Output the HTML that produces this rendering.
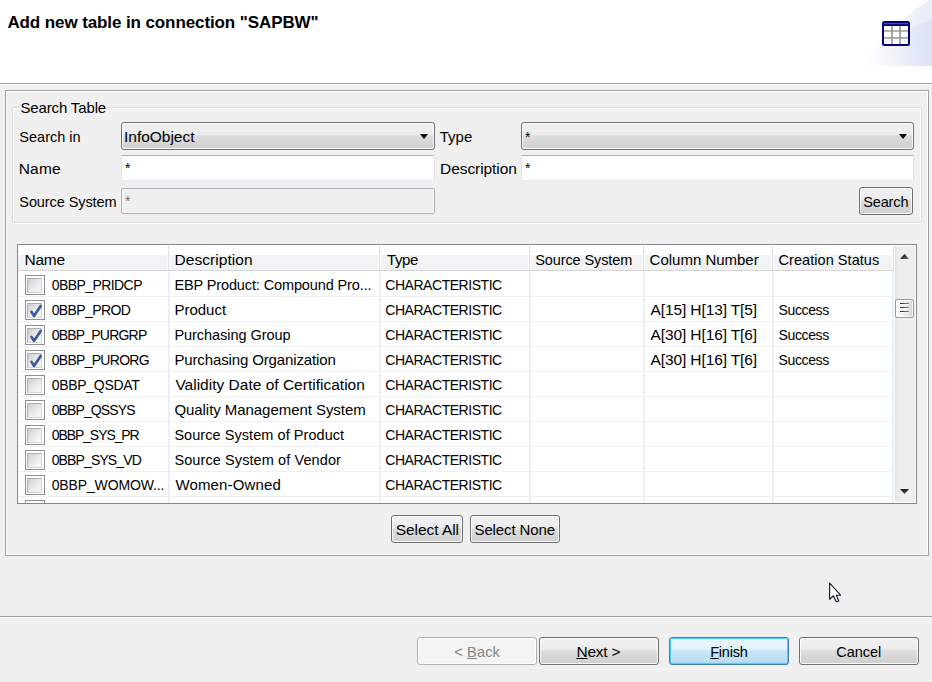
<!DOCTYPE html><html><head><meta charset="utf-8"><style>
*{margin:0;padding:0;box-sizing:border-box}
html,body{width:932px;height:682px;overflow:hidden}
body{position:relative;background:#f0f0f0;font-family:"Liberation Sans",sans-serif;font-size:14px;line-height:20px;color:#000}
.t{position:absolute;white-space:pre;line-height:20px}
.a{position:absolute}
.btn{position:absolute;border:1px solid #707070;border-radius:3px;
 background:linear-gradient(#f2f2f2 0%,#ebebeb 45%,#dddddd 49%,#cfcfcf 100%);
 box-shadow:inset 0 0 0 1px rgba(255,255,255,.85)}
.btnd{position:absolute;border:1px solid #adb2b5;border-radius:3px;background:#f4f4f4;
 box-shadow:inset 0 0 0 1px #fcfcfc}
.tf{position:absolute;background:#fff;border:1px solid;border-color:#abadb3 #dbdfe6 #e3e9ef #e2e3ea;border-radius:2px}
.tfd{position:absolute;background:#f0f0f0;border:1px solid #adb2b5;border-radius:2px;box-shadow:inset 0 0 0 1px #f8f8f8}
.arr{position:absolute;width:0;height:0;border-left:4.6px solid transparent;border-right:4.6px solid transparent;border-top:5px solid #000}
.cb{position:absolute;width:20px;height:20px;border:1px solid #8f8f8f;background:#fff}
.cb i{position:absolute;left:1px;top:2px;width:15px;height:15px;border:1px solid;border-color:#aab0b8 #d6d6d6 #d6d6d6 #aab0b8;
 background:linear-gradient(135deg,#c9cdd3 0%,#e2e4e7 40%,#f3f3f3 75%,#f8f8f8 100%)}
.cb svg{position:absolute;left:0;top:0}
.hl{position:absolute;height:1px;background:#f0f0f0}
.vl{position:absolute;width:2px;background:linear-gradient(90deg,#e5eefb 0,#e5eefb 50%,#f1f1f1 50%)}
</style></head><body>
<div class="a" style="left:0;top:0;width:932px;height:83px;background:#fff;overflow:hidden">
<svg class="a" style="left:832px;top:0" width="100" height="66" viewBox="832 0 100 66"><defs><linearGradient id="bg1" gradientUnits="userSpaceOnUse" x1="858" y1="50" x2="932" y2="40"><stop offset="0" stop-color="#fff"/><stop offset="1" stop-color="#eaeef9"/></linearGradient><linearGradient id="bg2" gradientUnits="userSpaceOnUse" x1="880" y1="50" x2="932" y2="50"><stop offset="0" stop-color="#dfe5f6" stop-opacity="0"/><stop offset="1" stop-color="#d6def3" stop-opacity="1"/></linearGradient></defs><path d="M858 66 C882 42 905 12 932 -1 L932 66 Z" fill="url(#bg1)"/><path d="M866 66 C882 48 900 28 932 20 L932 66 Z" fill="url(#bg2)" opacity=".7"/></svg>
<svg class="a" style="left:882px;top:21px" width="28" height="25" viewBox="0 0 28 25"><rect x="1" y="1" width="26" height="23" rx="1.5" fill="#fff" stroke="#000080" stroke-width="2"/><rect x="1" y="1" width="26" height="4" fill="#000080"/><rect x="2" y="2.2" width="24" height="1" fill="#5a5ab4"/><rect x="9.2" y="5" width="1.7" height="18" fill="#999"/><rect x="17.2" y="5" width="1.7" height="18" fill="#999"/><rect x="2" y="9.2" width="24" height="1.5" fill="#999"/><rect x="2" y="16.2" width="24" height="1.5" fill="#999"/></svg>
</div>
<div class="t" id="title" style="left:7.4px;top:13px;letter-spacing:-0.100px;font-weight:bold;font-size:17px;color:#000;">Add new table in connection &quot;SAPBW&quot;</div>
<div class="a" style="left:0;top:83px;width:932px;height:1px;background:#a0a0a0"></div>
<div class="a" style="left:0;top:84px;width:932px;height:1px;background:#fff"></div>
<div class="a" style="left:5px;top:90px;width:924px;height:466px;border:1px solid #a0a0a0;box-shadow:inset 1px 1px #fff,inset -1px -1px #fff"></div>
<div class="a" style="left:12px;top:107px;width:910px;height:116px;border:1px solid #d5dfe5;border-radius:2px;box-shadow:inset 1px 1px #fff,inset -1px 0 #fff,0 1px #fff"></div>
<div class="a" style="left:19px;top:100px;width:89px;height:12px;background:#f0f0f0"></div>
<div class="t" id="grp" style="left:20.4px;top:98px;letter-spacing:-0.136px;font-weight:normal;font-size:15px;color:#000;">Search Table</div>
<div class="t" id="l_in" style="left:19.3px;top:127px;letter-spacing:0.013px;font-weight:normal;font-size:14.5px;color:#000;">Search in</div>
<div class="btn" style="left:121px;top:122px;width:314px;height:28px"></div>
<div class="t" id="c1" style="left:124.1px;top:127px;letter-spacing:-0.033px;font-weight:normal;font-size:15.5px;color:#000;">InfoObject</div>
<div class="arr" style="left:420px;top:134px"></div>
<div class="t" id="l_type" style="left:439.8px;top:127px;letter-spacing:-0.033px;font-weight:normal;font-size:15px;color:#000;">Type</div>
<div class="btn" style="left:521px;top:122px;width:393px;height:28px"></div>
<div class="t" style="left:525px;top:127px">*</div>
<div class="arr" style="left:899px;top:134px"></div>
<div class="t" id="l_name" style="left:18.8px;top:159px;letter-spacing:0.133px;font-weight:normal;font-size:15.5px;color:#000;">Name</div>
<div class="tf" style="left:121px;top:155px;width:314px;height:26px"></div>
<div class="t" style="left:125px;top:158px">*</div>
<div class="t" id="l_desc" style="left:440.0px;top:159px;letter-spacing:-0.060px;font-weight:normal;font-size:15.5px;color:#000;">Description</div>
<div class="tf" style="left:521px;top:155px;width:393px;height:26px"></div>
<div class="t" style="left:525px;top:158px">*</div>
<div class="t" id="l_src" style="left:19.3px;top:192px;letter-spacing:-0.083px;font-weight:normal;font-size:14.5px;color:#000;">Source System</div>
<div class="tfd" style="left:121px;top:188px;width:314px;height:26px"></div>
<div class="t" style="left:125px;top:191px;color:#6d6d6d">*</div>
<div class="btn" style="left:859px;top:187px;width:54px;height:28px"></div>
<div class="t" id="b_search" style="left:863.3px;top:192px;letter-spacing:-0.160px;font-weight:normal;font-size:14.5px;color:#000;">Search</div>
<div class="a" style="left:17px;top:244px;width:900px;height:260px;border:1px solid #828790;background:#fff"></div>
<div class="a" style="left:18px;top:245px;width:876px;height:25px;background:linear-gradient(#fff 0%,#fff 38%,#f3f4f6 40%,#f1f2f4 100%)"></div>
<div class="a" style="left:18px;top:270px;width:876px;height:1px;background:#d5d5d5"></div>
<div class="a" style="left:167px;top:246px;width:3px;height:24px;background:linear-gradient(90deg,#fbfbfb 0,#fbfbfb 33%,#e2e3e5 33%,#e2e3e5 67%,#f9f9fa 67%)"></div>
<div class="a" style="left:378px;top:246px;width:3px;height:24px;background:linear-gradient(90deg,#fbfbfb 0,#fbfbfb 33%,#e2e3e5 33%,#e2e3e5 67%,#f9f9fa 67%)"></div>
<div class="a" style="left:528px;top:246px;width:3px;height:24px;background:linear-gradient(90deg,#fbfbfb 0,#fbfbfb 33%,#e2e3e5 33%,#e2e3e5 67%,#f9f9fa 67%)"></div>
<div class="a" style="left:642px;top:246px;width:3px;height:24px;background:linear-gradient(90deg,#fbfbfb 0,#fbfbfb 33%,#e2e3e5 33%,#e2e3e5 67%,#f9f9fa 67%)"></div>
<div class="a" style="left:771px;top:246px;width:3px;height:24px;background:linear-gradient(90deg,#fbfbfb 0,#fbfbfb 33%,#e2e3e5 33%,#e2e3e5 67%,#f9f9fa 67%)"></div>
<div class="a" style="left:892px;top:246px;width:3px;height:24px;background:linear-gradient(90deg,#fbfbfb 0,#fbfbfb 33%,#e2e3e5 33%,#e2e3e5 67%,#f9f9fa 67%)"></div>
<div class="t" id="th0" style="left:24.6px;top:250px;letter-spacing:-0.267px;font-weight:normal;font-size:15.5px;color:#000;">Name</div>
<div class="t" id="th1" style="left:174.6px;top:250px;letter-spacing:0.040px;font-weight:normal;font-size:15.5px;color:#000;">Description</div>
<div class="t" id="th2" style="left:387.0px;top:250px;letter-spacing:-0.367px;font-weight:normal;font-size:15px;color:#000;">Type</div>
<div class="t" id="th3" style="left:535.2px;top:250px;letter-spacing:-0.100px;font-weight:normal;font-size:14.5px;color:#000;">Source System</div>
<div class="t" id="th4" style="left:649.6px;top:250px;letter-spacing:-0.008px;font-weight:normal;font-size:15px;color:#000;">Column Number</div>
<div class="t" id="th5" style="left:778.5px;top:250px;letter-spacing:0.057px;font-weight:normal;font-size:14.5px;color:#000;">Creation Status</div>
<div class="hl" style="left:18px;top:296px;width:876px"></div>
<div class="hl" style="left:18px;top:321px;width:876px"></div>
<div class="hl" style="left:18px;top:346px;width:876px"></div>
<div class="hl" style="left:18px;top:371px;width:876px"></div>
<div class="hl" style="left:18px;top:396px;width:876px"></div>
<div class="hl" style="left:18px;top:421px;width:876px"></div>
<div class="hl" style="left:18px;top:446px;width:876px"></div>
<div class="hl" style="left:18px;top:471px;width:876px"></div>
<div class="hl" style="left:18px;top:496px;width:876px"></div>
<div class="vl" style="left:168px;top:272px;height:231px"></div>
<div class="vl" style="left:379px;top:272px;height:231px"></div>
<div class="vl" style="left:529px;top:272px;height:231px"></div>
<div class="vl" style="left:643px;top:272px;height:231px"></div>
<div class="vl" style="left:772px;top:272px;height:231px"></div>
<div class="vl" style="left:892px;top:272px;height:231px"></div>
<div class="cb" style="left:25px;top:275px"><i></i></div>
<div class="cb" style="left:25px;top:300px"><i></i><svg width="20" height="20" viewBox="0 0 20 20"><path d="M5.5 10.9 L8 14.9 L14.7 5" fill="none" stroke="#3b58a2" stroke-width="2.7" stroke-linejoin="round" stroke-linecap="round"/></svg></div>
<div class="cb" style="left:25px;top:325px"><i></i><svg width="20" height="20" viewBox="0 0 20 20"><path d="M5.5 10.9 L8 14.9 L14.7 5" fill="none" stroke="#3b58a2" stroke-width="2.7" stroke-linejoin="round" stroke-linecap="round"/></svg></div>
<div class="cb" style="left:25px;top:350px"><i></i><svg width="20" height="20" viewBox="0 0 20 20"><path d="M5.5 10.9 L8 14.9 L14.7 5" fill="none" stroke="#3b58a2" stroke-width="2.7" stroke-linejoin="round" stroke-linecap="round"/></svg></div>
<div class="cb" style="left:25px;top:375px"><i></i></div>
<div class="cb" style="left:25px;top:400px"><i></i></div>
<div class="cb" style="left:25px;top:425px"><i></i></div>
<div class="cb" style="left:25px;top:450px"><i></i></div>
<div class="cb" style="left:25px;top:475px"><i></i></div>
<div class="a" style="left:25px;top:500px;width:20px;height:3px;overflow:hidden"><div class="cb" style="left:0;top:0"><i></i></div></div>
<div class="t" id="rn0" style="left:51.7px;top:275px;letter-spacing:-0.570px;font-weight:normal;font-size:14px;color:#000;">0BBP_PRIDCP</div>
<div class="t" id="rd0" style="left:174.4px;top:275px;letter-spacing:-0.119px;font-weight:normal;font-size:14.5px;color:#000;">EBP Product: Compound Pro...</div>
<div class="t" id="rt0" style="left:385.3px;top:275px;letter-spacing:-0.462px;font-weight:normal;font-size:14px;color:#000;">CHARACTERISTIC</div>
<div class="t" id="rn1" style="left:51.7px;top:300px;letter-spacing:-0.600px;font-weight:normal;font-size:14px;color:#000;">0BBP_PROD</div>
<div class="t" id="rd1" style="left:174.4px;top:300px;letter-spacing:0.000px;font-weight:normal;font-size:15px;color:#000;">Product</div>
<div class="t" id="rt1" style="left:385.3px;top:300px;letter-spacing:-0.462px;font-weight:normal;font-size:14px;color:#000;">CHARACTERISTIC</div>
<div class="t" id="rn2" style="left:51.7px;top:325px;letter-spacing:-0.790px;font-weight:normal;font-size:14px;color:#000;">0BBP_PURGRP</div>
<div class="t" id="rd2" style="left:174.4px;top:325px;letter-spacing:-0.047px;font-weight:normal;font-size:14.5px;color:#000;">Purchasing Group</div>
<div class="t" id="rt2" style="left:385.3px;top:325px;letter-spacing:-0.462px;font-weight:normal;font-size:14px;color:#000;">CHARACTERISTIC</div>
<div class="t" id="rn3" style="left:51.7px;top:350px;letter-spacing:-0.710px;font-weight:normal;font-size:14px;color:#000;">0BBP_PURORG</div>
<div class="t" id="rd3" style="left:174.4px;top:350px;letter-spacing:-0.127px;font-weight:normal;font-size:15px;color:#000;">Purchasing Organization</div>
<div class="t" id="rt3" style="left:385.3px;top:350px;letter-spacing:-0.462px;font-weight:normal;font-size:14px;color:#000;">CHARACTERISTIC</div>
<div class="t" id="rn4" style="left:51.7px;top:375px;letter-spacing:-0.289px;font-weight:normal;font-size:14px;color:#000;">0BBP_QSDAT</div>
<div class="t" id="rd4" style="left:175.4px;top:375px;letter-spacing:0.007px;font-weight:normal;font-size:15.5px;color:#000;">Validity Date of Certification</div>
<div class="t" id="rt4" style="left:385.3px;top:375px;letter-spacing:-0.462px;font-weight:normal;font-size:14px;color:#000;">CHARACTERISTIC</div>
<div class="t" id="rn5" style="left:51.7px;top:400px;letter-spacing:-0.889px;font-weight:normal;font-size:14px;color:#000;">0BBP_QSSYS</div>
<div class="t" id="rd5" style="left:174.4px;top:400px;letter-spacing:-0.054px;font-weight:normal;font-size:15px;color:#000;">Quality Management System</div>
<div class="t" id="rt5" style="left:385.3px;top:400px;letter-spacing:-0.462px;font-weight:normal;font-size:14px;color:#000;">CHARACTERISTIC</div>
<div class="t" id="rn6" style="left:51.7px;top:425px;letter-spacing:-1.080px;font-weight:normal;font-size:14px;color:#000;">0BBP_SYS_PR</div>
<div class="t" id="rd6" style="left:174.4px;top:425px;letter-spacing:0.057px;font-weight:normal;font-size:14.5px;color:#000;">Source System of Product</div>
<div class="t" id="rt6" style="left:385.3px;top:425px;letter-spacing:-0.462px;font-weight:normal;font-size:14px;color:#000;">CHARACTERISTIC</div>
<div class="t" id="rn7" style="left:51.7px;top:450px;letter-spacing:-0.870px;font-weight:normal;font-size:14px;color:#000;">0BBP_SYS_VD</div>
<div class="t" id="rd7" style="left:174.4px;top:450px;letter-spacing:0.095px;font-weight:normal;font-size:14.5px;color:#000;">Source System of Vendor</div>
<div class="t" id="rt7" style="left:385.3px;top:450px;letter-spacing:-0.462px;font-weight:normal;font-size:14px;color:#000;">CHARACTERISTIC</div>
<div class="t" id="rn8" style="left:51.7px;top:475px;letter-spacing:-0.133px;font-weight:normal;font-size:14px;color:#000;">0BBP_WOMOW...</div>
<div class="t" id="rd8" style="left:175.4px;top:475px;letter-spacing:0.160px;font-weight:normal;font-size:15px;color:#000;">Women-Owned</div>
<div class="t" id="rt8" style="left:385.3px;top:475px;letter-spacing:-0.462px;font-weight:normal;font-size:14px;color:#000;">CHARACTERISTIC</div>
<div class="t" id="rc1" style="left:650.6px;top:300px;letter-spacing:-0.120px;font-weight:normal;font-size:15.5px;color:#000;">A[15] H[13] T[5]</div>
<div class="t" id="rs1" style="left:778.5px;top:300px;letter-spacing:-0.367px;font-weight:normal;font-size:14px;color:#000;">Success</div>
<div class="t" id="rc2" style="left:650.6px;top:325px;letter-spacing:-0.120px;font-weight:normal;font-size:15.5px;color:#000;">A[30] H[16] T[6]</div>
<div class="t" id="rs2" style="left:778.5px;top:325px;letter-spacing:-0.367px;font-weight:normal;font-size:14px;color:#000;">Success</div>
<div class="t" id="rc3" style="left:650.6px;top:350px;letter-spacing:-0.120px;font-weight:normal;font-size:15.5px;color:#000;">A[30] H[16] T[6]</div>
<div class="t" id="rs3" style="left:778.5px;top:350px;letter-spacing:-0.367px;font-weight:normal;font-size:14px;color:#000;">Success</div>
<div class="a" style="left:17px;top:504px;width:902px;height:12px;background:#f0f0f0"></div>
<div class="a" style="left:895px;top:246px;width:20px;height:256px;background:linear-gradient(90deg,#e3e3e3 0,#ececec 12%,#efefef 50%,#eeeeee 90%,#e8e8e8 100%)"></div>
<svg class="a" style="left:899px;top:253px" width="12" height="7" viewBox="0 0 12 7"><defs><linearGradient id="ag" x1="0" y1="0" x2="1" y2="1"><stop offset="0" stop-color="#0d0d0d"/><stop offset=".45" stop-color="#2a2a2a"/><stop offset="1" stop-color="#8a8a8a"/></linearGradient></defs><path d="M1 6 L5.5 1 L10.2 6 Z" fill="url(#ag)"/></svg>
<svg class="a" style="left:899px;top:488px" width="12" height="7" viewBox="0 0 12 7"><path d="M1 1 L10.2 1 L5.6 6 Z" fill="url(#ag)"/></svg>
<div class="a" style="left:895px;top:299px;width:19px;height:19px;border:1px solid #9b9b9b;border-radius:2px;background:linear-gradient(90deg,#f7f7f7 0%,#eeeeee 55%,#e2e2e2 75%,#d2d2d2 100%);box-shadow:inset 0 0 0 1px rgba(255,255,255,.8)"></div>
<div class="a" style="left:900px;top:303px;width:9px;height:2px;background:linear-gradient(#3a3a3a 0,#3a3a3a 50%,#fafafa 50%);-webkit-mask:linear-gradient(90deg,#000 0,#000 30%,rgba(0,0,0,.55) 100%)"></div>
<div class="a" style="left:900px;top:307px;width:9px;height:2px;background:linear-gradient(#3a3a3a 0,#3a3a3a 50%,#fafafa 50%);-webkit-mask:linear-gradient(90deg,#000 0,#000 30%,rgba(0,0,0,.55) 100%)"></div>
<div class="a" style="left:900px;top:311px;width:9px;height:2px;background:linear-gradient(#3a3a3a 0,#3a3a3a 50%,#fafafa 50%);-webkit-mask:linear-gradient(90deg,#000 0,#000 30%,rgba(0,0,0,.55) 100%)"></div>
<div class="btn" style="left:391px;top:515px;width:72px;height:28px"></div>
<div class="t" id="b_all" style="left:395.7px;top:520px;letter-spacing:-0.044px;font-weight:normal;font-size:15.5px;color:#000;">Select All</div>
<div class="btn" style="left:470px;top:515px;width:90px;height:28px"></div>
<div class="t" id="b_none" style="left:474.5px;top:520px;letter-spacing:-0.120px;font-weight:normal;font-size:15px;color:#000;">Select None</div>
<div class="a" style="left:0;top:616px;width:932px;height:1px;background:#a0a0a0"></div>
<div class="a" style="left:0;top:617px;width:932px;height:1px;background:#fff"></div>
<div class="btnd" style="left:417px;top:637px;width:120px;height:28px"></div>
<div class="t" id="b_back" style="left:454.2px;top:642px;letter-spacing:0.180px;font-weight:normal;font-size:14.5px;color:#838383;">&lt; <u>B</u>ack</div>
<div class="btn" style="left:539px;top:637px;width:120px;height:28px"></div>
<div class="t" id="b_next" style="left:576.5px;top:642px;letter-spacing:-0.260px;font-weight:normal;font-size:15.5px;color:#000;"><u>N</u>ext &gt;</div>
<div class="a" style="left:669px;top:637px;width:120px;height:28px;border:1px solid #3c7fb1;border-radius:3px;background:linear-gradient(#e9f6fd 0%,#e0f2fc 45%,#c7e7f7 49%,#b8ddf2 100%);box-shadow:inset 0 0 0 1px #48d3fa,inset 0 -1px 2px rgba(72,211,250,.5)"></div>
<div class="t" id="b_fin" style="left:710.2px;top:642px;letter-spacing:-0.220px;font-weight:normal;font-size:14.5px;color:#000;"><u>F</u>inish</div>
<div class="btn" style="left:799px;top:637px;width:120px;height:28px"></div>
<div class="t" id="b_can" style="left:836.2px;top:642px;letter-spacing:-0.000px;font-weight:normal;font-size:14.5px;color:#000;">Cancel</div>
<svg class="a" style="left:828px;top:582px" width="14" height="21" viewBox="0 0 14 21"><path d="M1.6 1.2 L1.6 17.2 L5.4 13.8 L7.9 19.2 Q8.7 20 9.7 19.6 L10.7 19 L8.4 13.3 L12.6 13.1 Z" fill="#fff" stroke="#1a1a2a" stroke-width="1.15" stroke-linejoin="round"/></svg>
</body></html>
